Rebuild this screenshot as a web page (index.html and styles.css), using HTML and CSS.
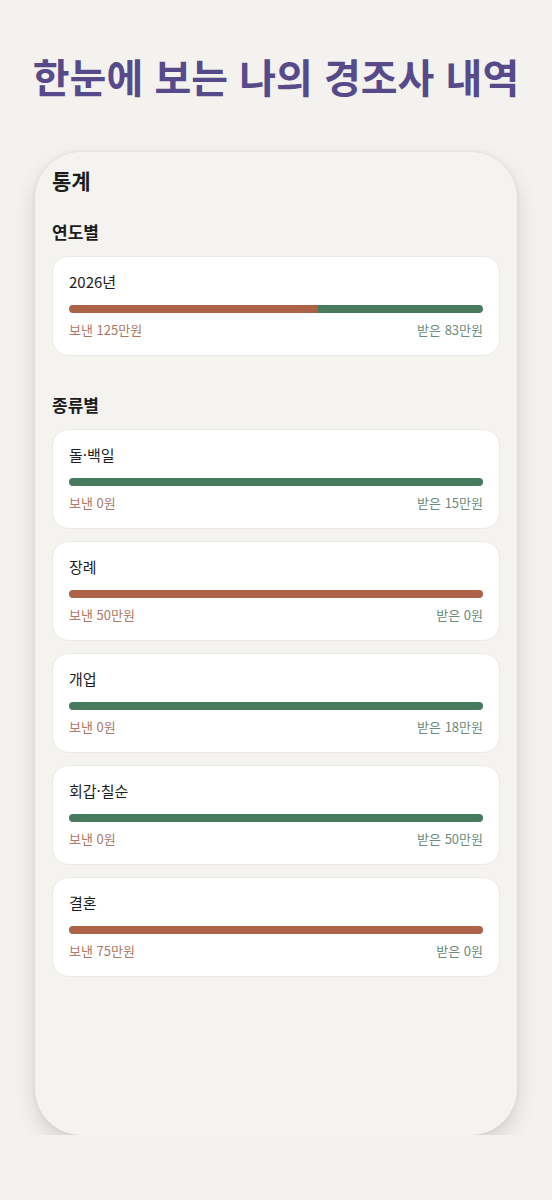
FILE: index.html
```html
<!DOCTYPE html>
<html lang="ko">
  <head>
    <meta charset="UTF-8" />
    <meta name="viewport" content="width=device-width, initial-scale=1.0" />
    <title>경조사 통계</title>
    <link rel="stylesheet" href="styles.css">
  </head>
  <body>
    <h1 class="headline">한눈에 보는 나의 경조사 내역</h1>

    <div class="phone">
      <h2 class="page-title">통계</h2>

      <!-- 연도별 -->
      <h3 class="section-title">연도별</h3>
      <div class="card-list">
        <div class="stat-card">
          <div class="stat-name">2026년</div>
          <div class="bar">
            <div class="bar-sent" style="width: 60.1%"></div>
            <div class="bar-received" style="width: 39.9%"></div>
          </div>
          <div class="stat-values">
            <span class="sent">보낸 125만원</span>
            <span class="received">받은 83만원</span>
          </div>
        </div>
      </div>

      <!-- 종류별 -->
      <h3 class="section-title section-gap">종류별</h3>
      <div class="card-list">
        <div class="stat-card">
          <div class="stat-name">돌·백일</div>
          <div class="bar">
            <div class="bar-received" style="width: 100%"></div>
          </div>
          <div class="stat-values">
            <span class="sent">보낸 0원</span>
            <span class="received">받은 15만원</span>
          </div>
        </div>
        <div class="stat-card">
          <div class="stat-name">장례</div>
          <div class="bar">
            <div class="bar-sent" style="width: 100%"></div>
          </div>
          <div class="stat-values">
            <span class="sent">보낸 50만원</span>
            <span class="received">받은 0원</span>
          </div>
        </div>
        <div class="stat-card">
          <div class="stat-name">개업</div>
          <div class="bar">
            <div class="bar-received" style="width: 100%"></div>
          </div>
          <div class="stat-values">
            <span class="sent">보낸 0원</span>
            <span class="received">받은 18만원</span>
          </div>
        </div>
        <div class="stat-card">
          <div class="stat-name">회갑·칠순</div>
          <div class="bar">
            <div class="bar-received" style="width: 100%"></div>
          </div>
          <div class="stat-values">
            <span class="sent">보낸 0원</span>
            <span class="received">받은 50만원</span>
          </div>
        </div>
        <div class="stat-card">
          <div class="stat-name">결혼</div>
          <div class="bar">
            <div class="bar-sent" style="width: 100%"></div>
          </div>
          <div class="stat-values">
            <span class="sent">보낸 75만원</span>
            <span class="received">받은 0원</span>
          </div>
        </div>
      </div>
    </div>
  </body>
</html>
```

FILE: styles.css
```css
body {
  font-family: "Noto Sans CJK KR", "Noto Sans", sans-serif;
  margin: 0;
  background-color: #f3f2ee;
  color: #1c1c1c;
}

.headline {
  margin: 48px 0 48px;
  font-size: 40px;
  line-height: 56px;
  font-weight: 700;
  text-align: center;
  color: #564a8b;
}

/* phone frame */
.phone {
  box-sizing: border-box;
  width: 482px;
  height: 983px;
  margin-left: 35px;
  padding: 14px 17px 0;
  background-color: #f4f3f0;
  border-radius: 46px;
  box-shadow: 0 10px 22px rgba(0, 0, 0, 0.13), 0 0 4px rgba(0, 0, 0, 0.08);
}

.page-title {
  margin: 0 0 26px;
  font-size: 21px;
  line-height: 28px;
  font-weight: 700;
}

.section-title {
  margin: 0 0 12px;
  font-size: 17px;
  line-height: 24px;
  font-weight: 700;
}

.section-gap {
  margin-top: 37px;
}

.card-list {
  display: flex;
  flex-direction: column;
  gap: 12px;
}

.stat-card {
  box-sizing: border-box;
  height: 100px;
  padding: 13px 16px 0;
  background-color: #fff;
  border: 1px solid #ebe9e5;
  border-radius: 16px;
}

.stat-name {
  font-size: 15px;
  line-height: 24px;
  font-weight: 400;
  color: #1c1c1c;
}

.bar {
  display: flex;
  height: 8px;
  margin-top: 11px;
  border-radius: 4px;
  overflow: hidden;
}

.bar-sent {
  background-color: #ab6247;
}

.bar-received {
  background-color: #477a5f;
}

.stat-values {
  display: flex;
  justify-content: space-between;
  margin-top: 8px;
  font-size: 13px;
  line-height: 18px;
}

.sent {
  color: #ad7866;
}

.received {
  color: #6c8d7d;
}
```
